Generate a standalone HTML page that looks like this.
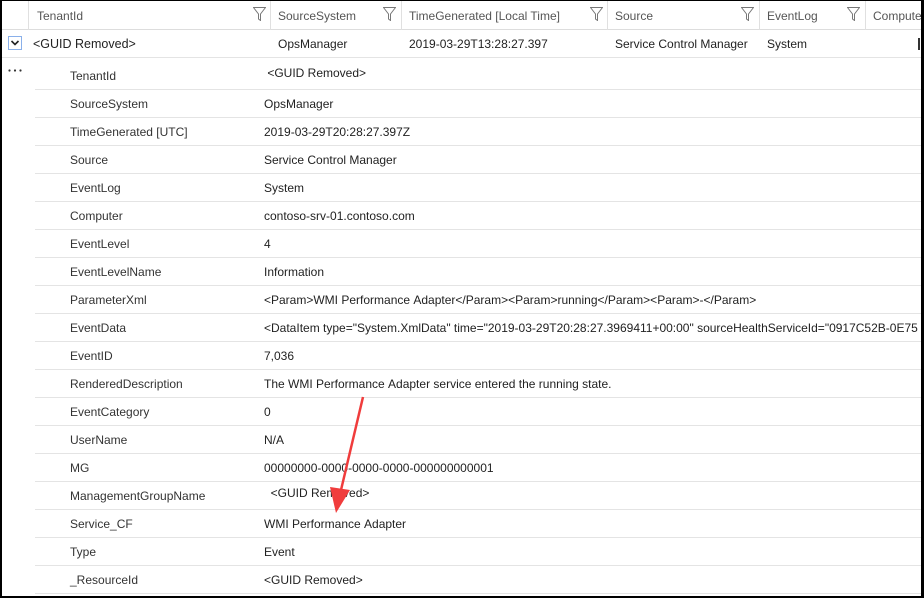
<!DOCTYPE html>
<html><head><style>
body{margin:0;width:924px;height:598px;overflow:hidden;background:#fff;font-family:"Liberation Sans",sans-serif;font-size:12px;color:#222;position:relative}
.frame{position:absolute;left:0;top:0;width:924px;height:598px;border:1px solid #000;border-left-width:2px;border-right-width:3px;border-bottom-width:2px;box-sizing:border-box;z-index:5}
.a{position:absolute;white-space:nowrap}
.h{color:#555;top:9px}
.vl{position:absolute;top:1px;height:29px;width:1px;background:#e0e0e0}
.hl{position:absolute;height:1px;background:#e4e4e4}
.f{position:absolute;top:7px}
</style></head><body>
<div class="frame"></div>
<div class="hl" style="left:2px;right:2px;top:29px;background:#ddd"></div>
<div class="hl" style="left:2px;right:2px;top:57px"></div>
<div class="vl" style="left:28px"></div>
<div class="vl" style="left:270px"></div>
<div class="vl" style="left:401px"></div>
<div class="vl" style="left:607px"></div>
<div class="vl" style="left:759px"></div>
<div class="vl" style="left:865px"></div>
<span class="a h" style="left:37px">TenantId</span>
<span class="a h" style="left:278px">SourceSystem</span>
<span class="a h" style="left:409px">TimeGenerated [Local Time]</span>
<span class="a h" style="left:615px">Source</span>
<span class="a h" style="left:767px">EventLog</span>
<span class="a h" style="left:873px">Compute</span>
<svg class="f" style="left:253px" width="13" height="14" viewBox="0 0 13 14"><path d="M0.5 0.5H12.5L7.5 7V13.5L5.5 12V7Z" fill="none" stroke="#777"/></svg>
<svg class="f" style="left:383px" width="13" height="14" viewBox="0 0 13 14"><path d="M0.5 0.5H12.5L7.5 7V13.5L5.5 12V7Z" fill="none" stroke="#777"/></svg>
<svg class="f" style="left:590px" width="13" height="14" viewBox="0 0 13 14"><path d="M0.5 0.5H12.5L7.5 7V13.5L5.5 12V7Z" fill="none" stroke="#777"/></svg>
<svg class="f" style="left:741px" width="13" height="14" viewBox="0 0 13 14"><path d="M0.5 0.5H12.5L7.5 7V13.5L5.5 12V7Z" fill="none" stroke="#777"/></svg>
<svg class="f" style="left:847px" width="13" height="14" viewBox="0 0 13 14"><path d="M0.5 0.5H12.5L7.5 7V13.5L5.5 12V7Z" fill="none" stroke="#777"/></svg>
<div class="a" style="left:8px;top:36px;width:14px;height:14px;border:1px solid #8ab0ea;box-sizing:border-box"></div>
<svg class="a" style="left:10px;top:39px" width="10" height="8"><path d="M1.5 2L5 5.5L8.5 2" fill="none" stroke="#222" stroke-width="1.6"/></svg>
<span class="a" style="left:33px;top:37px;font-size:12.5px">&lt;GUID Removed&gt;</span>
<span class="a" style="left:278px;top:37px">OpsManager</span>
<span class="a" style="left:409px;top:37px">2019-03-29T13:28:27.397</span>
<span class="a" style="left:615px;top:37px">Service Control Manager</span>
<span class="a" style="left:767px;top:37px">System</span>
<div class="a" style="left:918px;top:38px;width:2px;height:12px;background:#333"></div>
<svg class="a" style="left:8px;top:69px" width="16" height="4"><circle cx="1.5" cy="1.5" r="1.1" fill="#333"/><circle cx="7" cy="1.5" r="1.1" fill="#333"/><circle cx="12.5" cy="1.5" r="1.1" fill="#333"/></svg>
<div id="rows"></div>
<script>
var r=[["TenantId"," <GUID Removed>"],["SourceSystem","OpsManager"],["TimeGenerated [UTC]","2019-03-29T20:28:27.397Z"],["Source","Service Control Manager"],["EventLog","System"],["Computer","contoso-srv-01.contoso.com"],["EventLevel","4"],["EventLevelName","Information"],["ParameterXml","<Param>WMI Performance Adapter</Param><Param>running</Param><Param>-</Param>"],["EventData","<DataItem type=\"System.XmlData\" time=\"2019-03-29T20:28:27.3969411+00:00\" sourceHealthServiceId=\"0917C52B-0E75"],["EventID","7,036"],["RenderedDescription","The WMI Performance Adapter service entered the running state."],["EventCategory","0"],["UserName","N/A"],["MG","00000000-0000-0000-0000-000000000001"],["ManagementGroupName","  <GUID Removed>"],["Service_CF","WMI Performance Adapter"],["Type","Event"],["_ResourceId","<GUID Removed>"]];
var h="";
for(var i=0;i<r.length;i++){var y=61+i*28;
h+='<span class="a" style="left:70px;top:'+(y+8)+'px;color:#333">'+r[i][0]+'</span>';
var v=r[i][1].replace(/&/g,"&amp;").replace(/</g,"&lt;").replace(/>/g,"&gt;").replace(/ /g,"&nbsp;");
h+='<span class="a" style="left:264px;top:'+(y+(i==0||i==15?5:8))+'px;color:#222">'+v+'</span>';
h+='<div class="hl" style="left:35px;right:2px;top:'+(y+28)+'px"></div>';}
document.getElementById("rows").innerHTML=h;
</script>
<svg class="a" style="left:0;top:0" width="924" height="598"><line x1="363" y1="397" x2="341" y2="490" stroke="#f03c3c" stroke-width="2.5"/><path d="M330 487L336 513L350 490Z" fill="#f03c3c"/></svg>
</body></html>
